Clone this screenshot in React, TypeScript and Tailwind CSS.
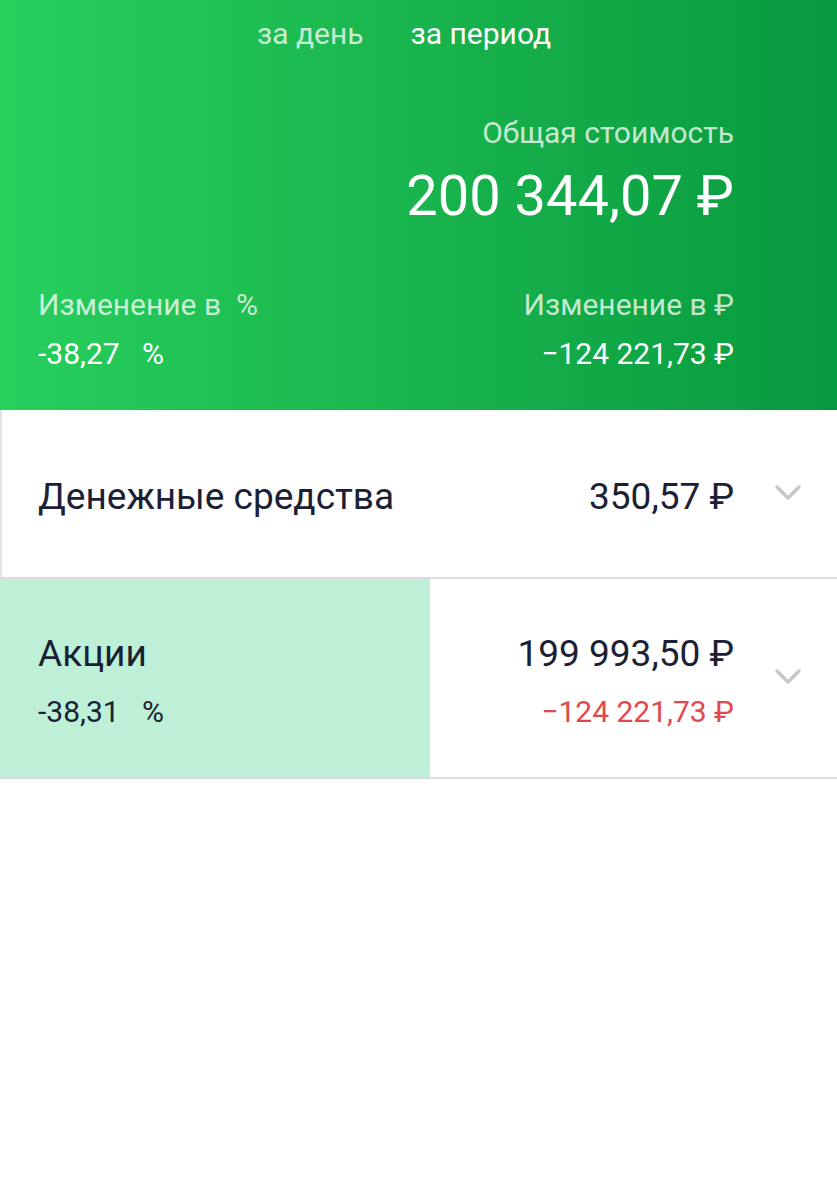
import React from "react";

const Chevron = () => (
  <svg width="28" height="18" viewBox="0 0 28 18" fill="none">
    <path d="M3 3 L14 14 L25 3" stroke="#c8c8c8" strokeWidth="3.5" strokeLinecap="round" strokeLinejoin="round" />
  </svg>
);

export default function App() {
  return (
    <div className="w-[837px] min-h-[1200px] bg-white" style={{ fontFamily: "Roboto, 'Noto Sans', sans-serif" }}>
      <div className="h-[410px] bg-gradient-to-r from-[#27cf5d] to-[#069a3e] text-white">
        <div className="flex justify-center gap-[47px] pt-[13px] pr-[29px] text-[30px] leading-[42px]">
          <span className="text-white/75">за день</span>
          <span>за период</span>
        </div>
        <div className="flex flex-col items-end pr-[103px] mt-[57px]">
          <div className="text-[30px] leading-[42px] text-white/75">Общая стоимость</div>
          <div className="text-[56px] leading-[64px] mt-[10px]">200 344,07 ₽</div>
        </div>
        <div className="flex justify-between pl-[38px] pr-[103px] mt-[56px] text-[30px] leading-[42px]">
          <div className="flex flex-col">
            <span className="text-white/75">Изменение в&nbsp;&nbsp;%</span>
            <span className="mt-[7px]">-38,27&nbsp;&nbsp;&nbsp;%</span>
          </div>
          <div className="flex flex-col items-end">
            <span className="text-white/75">Изменение в ₽</span>
            <span className="mt-[7px]">−124 221,73 ₽</span>
          </div>
        </div>
      </div>
      <div className="flex h-[167px] items-center border-l-2 border-[#e2e2e2] text-[#1b2135]">
        <div className="flex-1 pl-[36px] text-[37px] pt-[6px]">Денежные средства</div>
        <div className="text-[37px] pt-[6px]">350,57 ₽</div>
        <div className="w-[103px] flex justify-center pl-[4px] pb-[2px]"><Chevron /></div>
      </div>
      <div className="h-[2px] bg-[#dcdcdc]" />
      <div className="flex h-[198px] text-[#1b2135]">
        <div className="w-[430px] bg-[#bdf0d7] pl-[38px] flex flex-col pt-[53px]">
          <span className="text-[37px] leading-[44px]">Акции</span>
          <span className="text-[30px] leading-[42px] mt-[15px]">-38,31&nbsp;&nbsp;&nbsp;%</span>
        </div>
        <div className="flex-1 flex flex-col items-end pt-[53px]">
          <span className="text-[37px] leading-[44px]">199 993,50 ₽</span>
          <span className="text-[30px] leading-[42px] mt-[15px] text-[#e5474c]">−124 221,73 ₽</span>
        </div>
        <div className="w-[103px] flex justify-center items-center pl-[4px] pb-[2px]"><Chevron /></div>
      </div>
      <div className="h-[2px] bg-[#dcdcdc]" />
    </div>
  );
}
